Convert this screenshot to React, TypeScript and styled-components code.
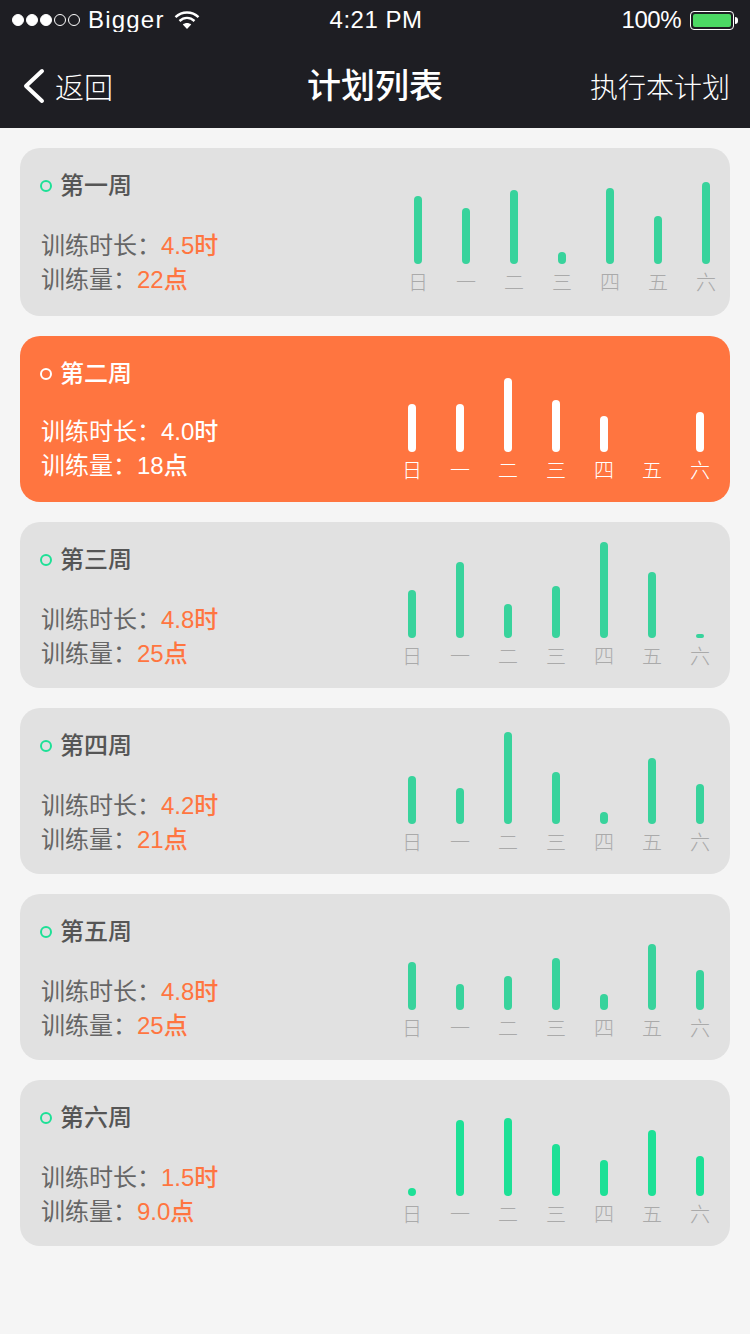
import React from 'react'
import styled, { createGlobalStyle } from 'styled-components'

const GlobalStyle = createGlobalStyle`
  html, body {
    margin: 0;
    padding: 0;
    background: #f5f5f5;
  }
  body {
    font-family: "Liberation Sans", "Noto Sans CJK SC", sans-serif;
  }
`

const Page = styled.div`
  width: 750px;
  height: 1334px;
  overflow: hidden;
  background: #f5f5f5;
`

const Header = styled.header`
  height: 128px;
  background: #1e1e23;
  color: #fff;
`

const StatusBar = styled.div`
  height: 32px;
  padding: 0 16px 0 12px;
  overflow: hidden;
  display: grid;
  grid-template-columns: 1fr auto 1fr;
  align-items: center;
  font-size: 24px;
  line-height: 40px;
`

const StatusLeft = styled.div`
  display: flex;
  align-items: center;
`

const StatusRight = styled.div`
  display: flex;
  align-items: center;
  justify-content: flex-end;
`

const Signal = styled.i<{ $on?: boolean }>`
  width: 12px;
  height: 12px;
  margin-right: 2px;
  box-sizing: border-box;
  border-radius: 50%;
  border: 1px solid #fff;
  background: ${p => (p.$on ? '#fff' : 'transparent')};
`

const Carrier = styled.span`
  margin: 0 9px 0 6px;
  letter-spacing: 1.2px;
`

const Clock = styled.span`
  margin-left: 6px;
  letter-spacing: 0.5px;
`

const Percent = styled.span`
  margin-right: 9px;
  letter-spacing: -0.5px;
`

const Battery = styled.div`
  width: 44px;
  height: 19px;
  box-sizing: border-box;
  padding: 2px;
  border: 1px solid #fff;
  border-radius: 4px;
  position: relative;

  &::after {
    content: '';
    position: absolute;
    right: -5px;
    top: 5px;
    width: 3px;
    height: 7px;
    background: #fff;
    border-radius: 0 3px 3px 0;
  }
`

const BatteryLevel = styled.div`
  height: 100%;
  background: #4cd964;
  border-radius: 2px;
`

const NavBar = styled.nav`
  height: 84px;
  padding: 12px 20px 0 23px;
  display: grid;
  grid-template-columns: 1fr auto 1fr;
  align-items: center;
`

const BackLink = styled.div`
  display: flex;
  align-items: center;
  gap: 10px;
  font-size: 29px;
  font-weight: 300;
`

const NavTitle = styled.h1`
  margin: 0 3px 0 0;
  font-size: 34px;
  font-weight: 500;
  line-height: 44px;
`

const NavAction = styled.div`
  text-align: right;
  font-size: 28px;
  font-weight: 300;
`

const List = styled.main`
  padding: 20px;
  display: flex;
  flex-direction: column;
  gap: 20px;
`

const Card = styled.section<{ $active: boolean; $tall: boolean }>`
  height: ${p => (p.$tall ? 168 : 166)}px;
  box-sizing: border-box;
  padding: 0 ${p => (p.$tall ? 0 : 6)}px ${p => (p.$tall ? 22 : 20)}px 20px;
  border-radius: 20px;
  background: ${p => (p.$active ? '#ff7540' : '#e1e1e1')};
  display: flex;
  justify-content: space-between;
`

const Summary = styled.div`
  display: flex;
  flex-direction: column;
`

const WeekRow = styled.div`
  height: 34px;
  margin-top: 21px;
  display: flex;
  align-items: center;
`

const WeekDot = styled.i<{ $active: boolean }>`
  width: 12px;
  height: 12px;
  box-sizing: border-box;
  margin-right: 8px;
  border-radius: 50%;
  border: 2px solid ${p => (p.$active ? '#fff' : '#1de096')};
`

const WeekName = styled.h2<{ $active: boolean }>`
  margin: 0;
  padding-bottom: 6px;
  font-size: 24px;
  font-weight: 500;
  color: ${p => (p.$active ? '#fff' : '#555')};
`

const Stats = styled.div<{ $active: boolean }>`
  margin-top: ${p => (p.$active ? 24 : 26)}px;
  padding-left: 1px;
  font-size: 24px;
  line-height: 34px;
  color: ${p => (p.$active ? '#fff' : '#666')};
`

const StatValue = styled.span<{ $active: boolean }>`
  font-weight: 500;
  color: ${p => (p.$active ? '#fff' : '#ff7540')};
`

const Chart = styled.div`
  display: flex;
`

const Day = styled.div`
  width: 48px;
  display: flex;
  flex-direction: column;
  justify-content: flex-end;
  align-items: center;
`

const Bar = styled.div<{ $bright: boolean; $active: boolean }>`
  width: 8px;
  border-radius: 4px;
  background: ${p => (p.$active ? '#fff' : p.$bright ? '#1de096' : '#38d39c')};
`

const DayLabel = styled.span<{ $active: boolean }>`
  margin-top: 9px;
  font-size: 20px;
  font-weight: 300;
  line-height: 21px;
  color: ${p => (p.$active ? '#fff' : '#aaa')};
`

const DAYS = ['日', '一', '二', '三', '四', '五', '六']

const WEEKS = [
  { name: '第一周', hours: '4.5时', load: '22点', bars: [68, 56, 74, 12, 76, 48, 82], tall: true },
  { name: '第二周', hours: '4.0时', load: '18点', bars: [48, 48, 74, 52, 36, 0, 40], active: true },
  { name: '第三周', hours: '4.8时', load: '25点', bars: [48, 76, 34, 52, 96, 66, 4] },
  { name: '第四周', hours: '4.2时', load: '21点', bars: [48, 36, 92, 52, 12, 66, 40] },
  { name: '第五周', hours: '4.8时', load: '25点', bars: [48, 26, 34, 52, 16, 66, 40] },
  { name: '第六周', hours: '1.5时', load: '9.0点', bars: [8, 76, 78, 52, 36, 66, 40], bright: true },
]

const WifiIcon = () => (
  <svg width="26" height="20" viewBox="0 0 26 20" fill="none" stroke="#fff" strokeWidth="2.4">
    <path d="M1.5 7.2C8 1 18 1 24.5 7.2" />
    <path d="M5.5 11C10 6.8 16 6.8 20.5 11" />
    <path d="M13 19L8.8 14.4C11.2 12.4 14.8 12.4 17.2 14.4Z" fill="#fff" stroke="none" />
  </svg>
)

const BackIcon = () => (
  <svg width="22" height="36" viewBox="0 0 22 36" fill="none" stroke="#fff" strokeWidth="4" strokeLinecap="round" strokeLinejoin="round">
    <path d="M19 3L3 18L19 33" />
  </svg>
)

export default function App() {
  return (
    <Page>
      <GlobalStyle />
      <Header>
        <StatusBar>
          <StatusLeft>
            <Signal $on />
            <Signal $on />
            <Signal $on />
            <Signal />
            <Signal />
            <Carrier>Bigger</Carrier>
            <WifiIcon />
          </StatusLeft>
          <Clock>4:21 PM</Clock>
          <StatusRight>
            <Percent>100%</Percent>
            <Battery>
              <BatteryLevel />
            </Battery>
          </StatusRight>
        </StatusBar>
        <NavBar>
          <BackLink>
            <BackIcon />
            返回
          </BackLink>
          <NavTitle>计划列表</NavTitle>
          <NavAction>执行本计划</NavAction>
        </NavBar>
      </Header>
      <List>
        {WEEKS.map(week => {
          const active = !!week.active
          return (
            <Card key={week.name} $active={active} $tall={!!week.tall}>
              <Summary>
                <WeekRow>
                  <WeekDot $active={active} />
                  <WeekName $active={active}>{week.name}</WeekName>
                </WeekRow>
                <Stats $active={active}>
                  <div>
                    训练时长：<StatValue $active={active}>{week.hours}</StatValue>
                  </div>
                  <div>
                    训练量：<StatValue $active={active}>{week.load}</StatValue>
                  </div>
                </Stats>
              </Summary>
              <Chart>
                {DAYS.map((day, i) => (
                  <Day key={day}>
                    <Bar $active={active} $bright={!!week.bright} style={{ height: week.bars[i] }} />
                    <DayLabel $active={active}>{day}</DayLabel>
                  </Day>
                ))}
              </Chart>
            </Card>
          )
        })}
      </List>
    </Page>
  )
}
